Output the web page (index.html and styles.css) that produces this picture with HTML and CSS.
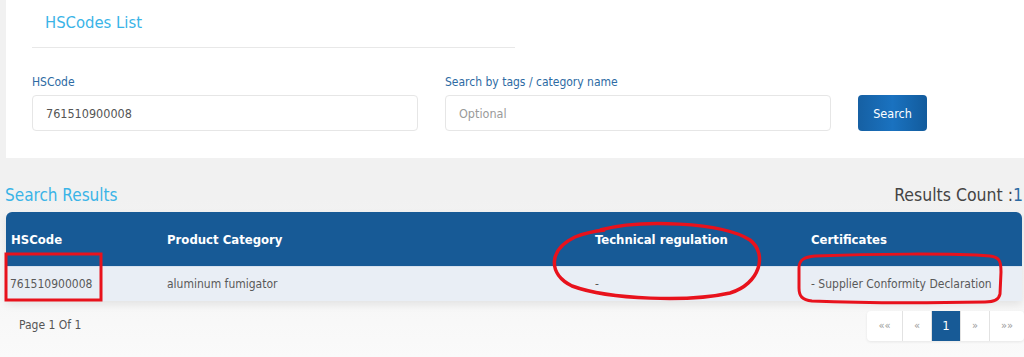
FILE: index.html
```html
<!DOCTYPE html>
<html lang="en">
<head>
    <meta charset="UTF-8">
    <title>HSCodes List</title>
    <link rel="stylesheet" href="styles.css">
</head>
<body>
    <!-- Search Panel -->
    <section class="panel">
        <div class="panel-title">HSCodes List</div>
        <form class="search-form">
            <div class="field">
                <label>HSCode</label>
                <input type="text" value="761510900008">
            </div>
            <div class="field">
                <label>Search by tags / category name</label>
                <input type="text" placeholder="Optional">
            </div>
            <button type="button" class="search-btn">Search</button>
        </form>
    </section>

    <!-- Results -->
    <section class="results">
        <div class="results-head">
            <h2>Search Results</h2>
            <div class="results-count">Results Count :<span>1</span></div>
        </div>

        <table class="results-table">
            <thead>
                <tr>
                    <th class="col-code">HSCode</th>
                    <th class="col-cat">Product Category</th>
                    <th class="col-reg">Technical regulation</th>
                    <th>Certificates</th>
                </tr>
            </thead>
            <tbody>
                <tr>
                    <td>761510900008</td>
                    <td>aluminum fumigator</td>
                    <td>-</td>
                    <td>- Supplier Conformity Declaration</td>
                </tr>
            </tbody>
        </table>

        <div class="pager-row">
            <div class="page-info">Page 1 Of 1</div>
            <ul class="pager">
                <li>&laquo;&laquo;</li>
                <li>&laquo;</li>
                <li class="active">1</li>
                <li>&raquo;</li>
                <li>&raquo;&raquo;</li>
            </ul>
        </div>
    </section>

    <!-- Red markup drawn over the screenshot -->
    <svg class="marks" width="1024" height="357" viewBox="0 0 1024 357">
        <rect x="6" y="254" width="95" height="46" fill="none" stroke="#e8121c" stroke-width="3"/>
        <path d="M600 230 C640 219 722 222 750 240 C768 254 760 284 730 293 C690 302 610 300 572 286 C548 274 548 250 575 237 C585 233 595 231 605 230" fill="none" stroke="#e8121c" stroke-width="3.5"/>
        <path d="M815 256 C870 254 950 253 990 256 C1000 257 1001 262 1001 272 L1000 294 C999 300 994 302 985 302 C930 303 860 303 812 301 C802 300 799 296 799 288 L799 268 C799 260 804 257 815 256 Z" fill="none" stroke="#e8121c" stroke-width="3"/>
    </svg>
</body>
</html>
```

FILE: styles.css
```css
/* General */
body {
    margin: 0;
    font-family: 'DejaVu Sans Condensed', 'DejaVu Sans', sans-serif;
    background: linear-gradient(#f1f1f1, #f1f1f1 200px, #fafafa 357px);
    height: 357px;
    overflow: hidden;
    position: relative;
}

/* Search Panel */
.panel {
    margin-left: 6px;
    background-color: #fff;
    padding: 0 26px;
    height: 158px;
    box-sizing: border-box;
}

.panel-title {
    width: 470px;
    height: 47px;
    padding-left: 13px;
    border-bottom: 1px solid #e8e8e8;
    color: #3ab4e7;
    font-size: 16.5px;
    line-height: 46px;
}

.search-form {
    display: flex;
    align-items: flex-end;
    gap: 27px;
    margin-top: 26px;
}

.field {
    display: flex;
    flex-direction: column;
    width: 386px;
}

.field label {
    color: #2d6aa3;
    font-size: 12px;
    line-height: 16px;
    margin-bottom: 5px;
}

.field input {
    height: 36px;
    box-sizing: border-box;
    border: 1px solid #e6e6e6;
    border-radius: 4px;
    padding: 0 13px;
    font-family: inherit;
    font-size: 12.5px;
    color: #555;
    outline: none;
}

.field input::placeholder {
    color: #9a9a9a;
}

.search-btn {
    width: 69px;
    height: 36px;
    border: none;
    border-radius: 4px;
    background: linear-gradient(90deg, #1660a3, #1a72c0 50%, #125b9c);
    color: #fff;
    font-family: inherit;
    font-size: 12.5px;
}

/* Results */
.results {
    padding-left: 6px;
}

.results-head {
    display: flex;
    justify-content: space-between;
    align-items: center;
    height: 54px;
    margin-right: 1px;
}

.results-head h2 {
    margin: 0 0 0 -1px;
    font-weight: normal;
    font-size: 17px;
    color: #3ab4e7;
    padding-top: 20px;
}

.results-count {
    font-size: 17.5px;
    color: #444;
    padding-top: 20px;
}

.results-count span {
    color: #2d6aa3;
}

.results-table {
    width: 1016px;
    border-collapse: separate;
    border-spacing: 0;
    box-shadow: 0 4px 8px rgba(0, 0, 0, 0.08);
}

.results-table th {
    background-color: #175a96;
    color: #fff;
    font-size: 13px;
    font-weight: bold;
    text-align: left;
    height: 54px;
    padding: 0 0 0 5px;
}

.results-table th:first-child {
    border-top-left-radius: 6px;
}

.results-table th:last-child {
    border-top-right-radius: 6px;
}

.results-table td {
    background-color: #e9eef5;
    color: #595959;
    font-size: 12px;
    height: 34px;
    padding: 0 0 0 5px;
    border-top: 1px solid #d7e1ee;
}

.results-table td:first-child {
    padding-left: 4px;
}

.col-code {
    width: 151px;
}

.col-cat {
    width: 423px;
}

.col-reg {
    width: 211px;
}

/* Pagination */
.pager-row {
    display: flex;
    justify-content: space-between;
    align-items: flex-start;
    margin-top: 10px;
}

.page-info {
    font-size: 12px;
    color: #555;
    margin: 7px 0 0 13px;
}

.pager {
    list-style: none;
    display: flex;
    margin: 0;
    padding: 0;
    background: #fff;
    border-radius: 4px;
    box-shadow: 0 1px 3px rgba(0, 0, 0, 0.08);
}

.pager li {
    width: 28px;
    height: 30px;
    line-height: 30px;
    text-align: center;
    font-size: 11px;
    color: #9a9a9a;
    border-left: 1px solid #e2e2e2;
}

.pager li:first-child {
    width: 35px;
    border-left: none;
}

.pager li:last-child {
    width: 34px;
}

.pager li.active {
    background-color: #175a96;
    color: #fff;
    font-size: 13px;
}

/* Markup overlay */
.marks {
    position: absolute;
    top: 0;
    left: 0;
    pointer-events: none;
}
```
